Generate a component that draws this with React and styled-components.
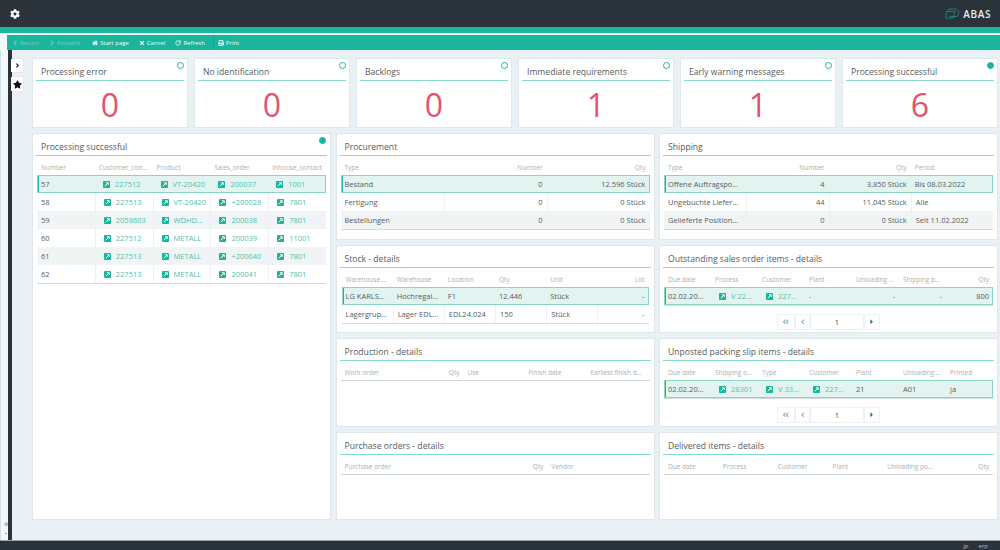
import React from "react";
import styled, { createGlobalStyle } from "styled-components";
import {
  FaCog,
  FaHome,
  FaTimes,
  FaPrint,
  FaStar,
  FaChevronLeft,
  FaChevronRight,
  FaAngleRight,
  FaAngleLeft,
  FaAngleDoubleLeft,
  FaCaretRight,
} from "react-icons/fa";
import { LuRotateCw } from "react-icons/lu";

const teal = "#1ab59c";

const Global = createGlobalStyle`
  html, body, #root { margin: 0; padding: 0; height: 100%; }
  body { font-family: "Open Sans", "Liberation Sans", sans-serif; background: #e9f1f5; overflow: hidden; }
  * { box-sizing: border-box; }
`;

const Page = styled.div`
  width: 1000px;
  height: 550px;
  display: flex;
  flex-direction: column;
`;

const TopBar = styled.header`
  height: 27px;
  background: #2a333a;
  display: flex;
  align-items: center;
  justify-content: space-between;
  padding: 0 9px 0 10px;
  color: #fff;
  font-size: 10px;
`;

const Brand = styled.div`
  display: flex;
  align-items: center;
  gap: 3px;
  font-size: 10px;
  font-weight: 600;
  letter-spacing: 0.6px;
  color: #e6ecee;
`;

const Accent = styled.div`
  height: 6px;
  background: ${teal};
`;

const Toolbar = styled.nav`
  height: 17px;
  border-top: 2px solid #e6f5f3;
  border-left: 7px solid #f3f8fb;
  background: ${teal};
  display: flex;
  align-items: center;
  padding-left: 5px;
`;

const ToolItem = styled.span`
  display: flex;
  align-items: center;
  gap: 2px;
  font-size: 6px;
  color: ${(p) => (p.$dim ? "#6fd3c2" : "#f2fbfa")};
  margin-right: ${(p) => p.$gap}px;
  white-space: nowrap;
`;

const ToolDivider = styled.span`
  width: 1px;
  height: 15px;
  background: #18a58e;
  margin-right: 4px;
`;

const Body = styled.div`
  flex: 1;
  display: flex;
  min-height: 0;
`;

const Side = styled.aside`
  width: 23px;
  display: flex;
  flex-direction: column;
  align-items: flex-start;
  padding: 9px 0 4px 11px;
  background: linear-gradient(
    to right,
    #cfe2f3 0 1px,
    #f3f8fb 1px 8px,
    #2a333a 8px 12px,
    transparent 12px
  );
`;

const SideButton = styled.button`
  width: 12px;
  height: ${(p) => p.$h}px;
  margin-bottom: 5px;
  padding: 0;
  border: 0;
  background: #fff;
  color: #111;
  display: flex;
  align-items: center;
  justify-content: center;
  box-shadow: 0 0 1px rgba(0, 0, 0, 0.2);
`;

const SideMarks = styled.div`
  margin: auto 0 0 -9px;
  display: flex;
  flex-direction: column;
  align-items: center;
  width: 8px;
  gap: 3px;
  font-size: 5px;
  line-height: 6px;
  color: #777;
`;

const Content = styled.main`
  flex: 1;
  padding: 8px 2px 20px 9px;
  display: flex;
  flex-direction: column;
  gap: 5px;
  min-width: 0;
`;

const KpiRow = styled.section`
  display: grid;
  grid-template-columns: repeat(6, 156px);
  column-gap: 6px;
  height: 70px;
`;

const Grid = styled.section`
  display: grid;
  grid-template-columns: 299px 319px 339px;
  grid-template-rows: 107px 88px 89px 88px;
  column-gap: 4.5px;
  row-gap: 5px;
`;

const Card = styled.div`
  position: relative;
  background: #fff;
  border: 1px solid #e0e7ea;
  min-width: 0;
  display: flex;
  flex-direction: column;
  ${(p) => p.$tall && "grid-row: 1 / span 4;"}
`;

const Title = styled.div`
  height: 23px;
  margin: -1px 3px 0;
  padding: 6px 0 0 5px;
  font-size: 8.6px;
  line-height: 16px;
  color: #555c60;
  border-bottom: 1px solid #84dacb;
  white-space: nowrap;
`;

const Dot = styled.span`
  position: absolute;
  top: 3px;
  right: ${(p) => p.$right}px;
  width: 7px;
  height: 7px;
  border-radius: 50%;
  border: 1.5px solid ${teal};
  background: ${(p) => (p.$on ? teal : "#fff")};
`;

const Count = styled.div`
  flex: 1;
  display: flex;
  align-items: center;
  justify-content: center;
  font-size: 32px;
  color: #e2536f;
`;

const Table = styled.div`
  margin: 0 ${(p) => p.$inset || 4}px;
  font-size: 7.5px;
  color: #555c60;
`;

const Head = styled.div`
  display: grid;
  grid-template-columns: ${(p) => p.$cols};
  height: ${(p) => (p.$empty ? 20 : 19)}px;
  align-items: start;
  padding-top: 5px;
  ${(p) => p.$empty && "border-bottom: 1px solid #cfd4d6;"}
`;

const HeadCell = styled.span`
  font-size: 6.5px;
  line-height: 13px;
  height: 13px;
  padding: 0 4px;
  color: #a9afb2;
  text-align: ${(p) => (p.$right ? "right" : "left")};
  white-space: nowrap;
  overflow: hidden;
  text-overflow: ellipsis;
`;

const Rows = styled.div`
  border-bottom: 1px solid #d5dadc;
`;

const Row = styled.div`
  display: grid;
  grid-template-columns: ${(p) => p.$cols};
  height: 18px;
  align-items: stretch;
  background: ${(p) => (p.$alt ? "#f1f4f5" : "#fff")};
  ${(p) =>
    p.$selected &&
    `
    background: #e3f4f0;
    box-shadow: inset 0 0 0 1px #86d5c5, inset 2px 0 0 ${teal};
  `}
`;

const Cell = styled.span`
  display: flex;
  align-items: center;
  gap: 5px;
  min-width: 0;
  padding: 0 4px;
  justify-content: ${(p) => (p.$right ? "flex-end" : "flex-start")};
  border-left: ${(p) => (p.$first || p.$selected ? "0" : "1px solid #eef0f1")};
  white-space: nowrap;
  overflow: hidden;
`;

const CellText = styled.span`
  overflow: hidden;
  text-overflow: ellipsis;
  color: ${(p) => (p.$link ? "#4fc1ae" : "inherit")};
`;

const LinkBadge = styled.svg`
  width: 7px;
  height: 7px;
  margin-left: 4px;
  flex: none;
`;

const Pager = styled.div`
  display: flex;
  justify-content: center;
  margin-top: 8px;
  height: 16px;
`;

const PageButton = styled.span`
  width: ${(p) => p.$w || 18}px;
  display: flex;
  align-items: center;
  justify-content: center;
  background: #fff;
  border: 1px solid #eff2f4;
  font-size: 7.5px;
  color: ${(p) => p.$color || "#8fb0ba"};
`;

function LinkIcon() {
  return (
    <LinkBadge viewBox="0 0 14 14">
      <rect width="14" height="14" rx="1.5" fill={teal} />
      <path d="M3.5 10.5 9.5 4.5M6 3.5h4.5V8" stroke="#fff" strokeWidth="2" fill="none" />
    </LinkBadge>
  );
}

function Logo() {
  return (
    <svg width="15" height="11" viewBox="0 0 30 22" fill="none" stroke="#1f9c8c" strokeWidth="1.4">
      <path d="M8 2h15l5 6-3 9H9" />
      <path d="M3 7h16l-2 13H1z" />
      <path d="M8 2 6 7M19 7l3-1" />
    </svg>
  );
}

function DataTable({ cols, heads, rows, inset }) {
  const empty = !rows || rows.length === 0;
  return (
    <Table $inset={inset}>
      <Head $cols={cols} $empty={empty}>
        {heads.map((h) => (
          <HeadCell key={h.label} $right={h.right}>
            {h.label}
          </HeadCell>
        ))}
      </Head>
      {!empty && (
        <Rows>
          {rows.map((row, i) => (
            <Row key={i} $cols={cols} $selected={i === 0} $alt={i % 2 === 0 && i > 0}>
              {row.map((c, j) => (
                <Cell key={j} $first={j === 0} $selected={i === 0} $right={heads[j].right || heads[j].cellRight}>
                  {typeof c === "object" ? (
                    <>
                      <LinkIcon />
                      <CellText $link>{c.link}</CellText>
                    </>
                  ) : (
                    <CellText>{c}</CellText>
                  )}
                </Cell>
              ))}
            </Row>
          ))}
        </Rows>
      )}
    </Table>
  );
}

function Pagination() {
  return (
    <Pager>
      <PageButton><FaAngleDoubleLeft /></PageButton>
      <PageButton $w={15}><FaAngleLeft /></PageButton>
      <PageButton $w={54} $color="#444">1</PageButton>
      <PageButton $w={16} $color="#2c6f86"><FaCaretRight /></PageButton>
    </Pager>
  );
}

const L = (v) => ({ link: v });

const kpis = [
  ["Processing error", "0"],
  ["No identification", "0"],
  ["Backlogs", "0"],
  ["Immediate requirements", "1"],
  ["Early warning messages", "1"],
  ["Processing successful", "6", true],
];

const h = (label, right, cellRight) => ({ label, right, cellRight });

const Footer = styled.footer`
  height: 10px;
  background: #2a333a;
  border-top: 1px solid #9aa3a8;
  display: flex;
  justify-content: flex-end;
  align-items: center;
  gap: 10px;
  padding-right: 12px;
  font-size: 6px;
  color: #b5bcc0;
`;

export default function App() {
  return (
    <Page>
      <Global />
      <TopBar>
        <FaCog size={10} />
        <Brand>
          <Logo />
          ABAS
        </Brand>
      </TopBar>
      <Accent />
      <Toolbar>
        <ToolItem $dim $gap={10}><FaChevronLeft size={6} />Return</ToolItem>
        <ToolItem $dim $gap={12}><FaChevronRight size={6} />Forward</ToolItem>
        <ToolItem $gap={10}><FaHome size={6} />Start page</ToolItem>
        <ToolItem $gap={10}><FaTimes size={6} />Cancel</ToolItem>
        <ToolItem $gap={8}><LuRotateCw size={6} strokeWidth={3} />Refresh</ToolItem>
        <ToolDivider />
        <ToolItem $gap={0}><FaPrint size={6} />Print</ToolItem>
      </Toolbar>
      <Body>
        <Side>
          <SideButton $h={13}><FaAngleRight size={7} /></SideButton>
          <SideButton $h={14}><FaStar size={9} /></SideButton>
          <SideMarks>
            <span>⚙</span>
            <span>▪</span>
          </SideMarks>
        </Side>
        <Content>
          <KpiRow>
            {kpis.map(([title, value, on]) => (
              <Card key={title}>
                <Title>{title}</Title>
                <Dot $on={on} $right={3} />
                <Count>{value}</Count>
              </Card>
            ))}
          </KpiRow>
          <Grid>
            <Card $tall>
              <Title>Processing successful</Title>
              <Dot $on $right={4} />
              <DataTable
                cols="repeat(5, 1fr)"
                heads={[h("Number"), h("Customer_con..."), h("Product"), h("Sales_order"), h("Inhouse_contact")]}
                rows={[
                  ["57", L("227512"), L("VT-20420"), L("200037"), L("1001")],
                  ["58", L("227513"), L("VT-20420"), L("+200028"), L("7801")],
                  ["59", L("2058603"), L("WDHD..."), L("200038"), L("7801")],
                  ["60", L("227512"), L("METALL"), L("200039"), L("11001")],
                  ["61", L("227513"), L("METALL"), L("+200040"), L("7801")],
                  ["62", L("227513"), L("METALL"), L("200041"), L("7801")],
                ]}
              />
            </Card>
            <Card>
              <Title>Procurement</Title>
              <DataTable
                cols="repeat(3, 1fr)"
                heads={[h("Type"), h("Number", true), h("Qty", true)]}
                rows={[
                  ["Bestand", "0", "12.596 Stück"],
                  ["Fertigung", "0", "0 Stück"],
                  ["Bestellungen", "0", "0 Stück"],
                ]}
              />
            </Card>
            <Card>
              <Title>Shipping</Title>
              <DataTable
                cols="repeat(4, 1fr)"
                heads={[h("Type"), h("Number", true), h("Qty", true), h("Period")]}
                rows={[
                  ["Offene Auftragspo...", "4", "3.850 Stück", "Bis 08.03.2022"],
                  ["Ungebuchte Liefer...", "44", "11.045 Stück", "Alle"],
                  ["Gelieferte Position...", "0", "0 Stück", "Seit 11.02.2022"],
                ]}
              />
            </Card>
            <Card>
              <Title>Stock - details</Title>
              <DataTable
                inset={5}
                cols="repeat(6, 1fr)"
                heads={[h("Warehouse ..."), h("Warehouse"), h("Location"), h("Qty"), h("Unit"), h("Lot", true)]}
                rows={[
                  ["LG KARLS...", "Hochregal...", "F1", "12.446", "Stück", "-"],
                  ["Lagergrup...", "Lager EDL...", "EDL24.024", "150", "Stück", "-"],
                ]}
              />
            </Card>
            <Card>
              <Title>Outstanding sales order items - details</Title>
              <DataTable
                cols="repeat(7, 1fr)"
                heads={[
                  h("Due date"),
                  h("Process"),
                  h("Customer"),
                  h("Plant"),
                  h("Unloading ...", false, true),
                  h("Shipping p...", false, true),
                  h("Qty", true),
                ]}
                rows={[["02.02.20...", L("V 22..."), L("227..."), "-", "-", "-", "800"]]}
              />
              <Pagination />
            </Card>
            <Card>
              <Title>Production - details</Title>
              <DataTable
                cols="88px 35px 61px 62px 1fr"
                heads={[h("Work order"), h("Qty", true), h("Use"), h("Finish date"), h("Earliest finish d...")]}
              />
            </Card>
            <Card>
              <Title>Unposted packing slip items - details</Title>
              <DataTable
                cols="repeat(7, 1fr)"
                heads={[
                  h("Due date"),
                  h("Shipping o..."),
                  h("Type"),
                  h("Customer"),
                  h("Plant"),
                  h("Unloading ..."),
                  h("Printed"),
                ]}
                rows={[["02.02.20...", L("28301"), L("V 33..."), L("227..."), "21", "A01", "ja"]]}
              />
              <Pagination />
            </Card>
            <Card>
              <Title>Purchase orders - details</Title>
              <DataTable
                cols="170px 37px 1fr"
                heads={[h("Purchase order"), h("Qty", true), h("Vendor")]}
              />
            </Card>
            <Card>
              <Title>Delivered items - details</Title>
              <DataTable
                cols="repeat(6, 1fr)"
                heads={[h("Due date"), h("Process"), h("Customer"), h("Plant"), h("Unloading po..."), h("Qty", true)]}
              />
            </Card>
          </Grid>
        </Content>
      </Body>
      <Footer>
        <span>jp</span>
        <span>erp</span>
      </Footer>
    </Page>
  );
}
